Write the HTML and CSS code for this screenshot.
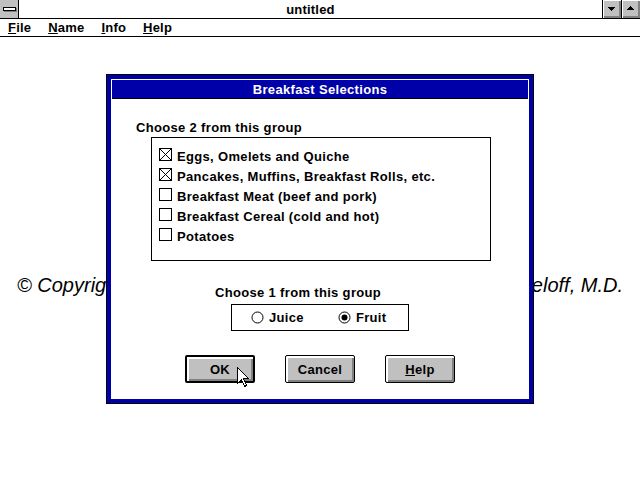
FILE: index.html
```html
<!DOCTYPE html>
<html>
<head>
<meta charset="utf-8">
<title>untitled</title>
<link rel="stylesheet" href="styles.css">
</head>
<body>
<div class="window">
  <div class="titlebar">
    <div class="sysbox"><div class="sysbar"></div></div>
    <div class="title">untitled</div>
    <div class="sizebtns">
      <div class="sizebtn">
        <svg width="18" height="18" viewBox="0 0 18 18" shape-rendering="crispEdges"><polygon points="5,7 12,7 8.5,11" fill="#000"/></svg>
      </div>
      <div class="sizebtn">
        <svg width="18" height="18" viewBox="0 0 18 18" shape-rendering="crispEdges"><polygon points="5,10 12,10 8.5,6" fill="#000"/></svg>
      </div>
    </div>
  </div>
  <div class="menubar">
    <span class="menu"><u>F</u>ile</span>
    <span class="menu"><u>N</u>ame</span>
    <span class="menu"><u>I</u>nfo</span>
    <span class="menu"><u>H</u>elp</span>
  </div>
  <div class="workspace">
    <p class="copyright"><span>© Copyright 1993</span><span>by Eric Zeloff, M.D.</span></p>
  </div>
</div>

<div class="dialog">
  <div class="frame">
    <div class="inner">
      <div class="dlg-title">Breakfast Selections</div>
      <div class="client">
        <div class="label1">Choose 2 from this group</div>
        <div class="group">
          <div class="row">
            <svg class="cb" width="13" height="13" viewBox="0 0 13 13" shape-rendering="crispEdges"><rect x="0.5" y="0.5" width="12" height="12" fill="#fff" stroke="#000"/><path d="M1 1L12 12M12 1L1 12" stroke="#000" stroke-width="1"/></svg>
            <span>Eggs, Omelets and Quiche</span>
          </div>
          <div class="row">
            <svg class="cb" width="13" height="13" viewBox="0 0 13 13" shape-rendering="crispEdges"><rect x="0.5" y="0.5" width="12" height="12" fill="#fff" stroke="#000"/><path d="M1 1L12 12M12 1L1 12" stroke="#000" stroke-width="1"/></svg>
            <span>Pancakes, Muffins, Breakfast Rolls, etc.</span>
          </div>
          <div class="row">
            <svg class="cb" width="13" height="13" viewBox="0 0 13 13" shape-rendering="crispEdges"><rect x="0.5" y="0.5" width="12" height="12" fill="#fff" stroke="#000"/></svg>
            <span>Breakfast Meat (beef and pork)</span>
          </div>
          <div class="row">
            <svg class="cb" width="13" height="13" viewBox="0 0 13 13" shape-rendering="crispEdges"><rect x="0.5" y="0.5" width="12" height="12" fill="#fff" stroke="#000"/></svg>
            <span>Breakfast Cereal (cold and hot)</span>
          </div>
          <div class="row">
            <svg class="cb" width="13" height="13" viewBox="0 0 13 13" shape-rendering="crispEdges"><rect x="0.5" y="0.5" width="12" height="12" fill="#fff" stroke="#000"/></svg>
            <span>Potatoes</span>
          </div>
        </div>
        <div class="label2">Choose 1 from this group</div>
        <div class="radiobox">
          <div class="radio">
            <svg width="13" height="13" viewBox="0 0 13 13"><circle cx="6.5" cy="6.5" r="5.5" fill="#fff" stroke="#000"/></svg>
            <span>Juice</span>
          </div>
          <div class="radio radio-second">
            <svg width="13" height="13" viewBox="0 0 13 13"><circle cx="6.5" cy="6.5" r="5.5" fill="#fff" stroke="#000"/><circle cx="6.5" cy="6.5" r="3" fill="#000"/></svg>
            <span>Fruit</span>
          </div>
        </div>
        <div class="buttons">
          <div class="btn btn-default">OK</div>
          <div class="btn">Cancel</div>
          <div class="btn"><u>H</u>elp</div>
        </div>
      </div>
    </div>
  </div>
</div>

<svg class="cursor" width="13" height="21" viewBox="0 0 13 21" shape-rendering="crispEdges">
  <polygon points="0.5,0.5 0.5,16.5 4.5,12.5 7.5,19.5 9.5,18.5 6.5,11.5 11.5,11.5" fill="#fff" stroke="#000" stroke-width="1" stroke-linejoin="miter"/>
</svg>
</body>
</html>
```

FILE: styles.css
```css
html, body {
  margin: 0;
  padding: 0;
  background: #fff;
}

body {
  width: 640px;
  height: 480px;
  overflow: hidden;
  position: relative;
  font-family: "Liberation Sans", Arial, sans-serif;
  font-weight: bold;
  font-size: 13px;
  color: #000;
  letter-spacing: 0.2px;
}

.window {
  width: 640px;
  height: 480px;
  display: flex;
  flex-direction: column;
}

.titlebar {
  display: flex;
  height: 18px;
  border-bottom: 1px solid #000;
  background: #fff;
}

.sysbox {
  width: 18px;
  height: 18px;
  background: #c0c0c0;
  border-right: 1px solid #000;
  display: flex;
  align-items: center;
  justify-content: center;
}

.sysbar {
  width: 11px;
  height: 2px;
  background: #fff;
  border: 1px solid #000;
  box-shadow: 1px 1px 0 #808080;
  margin-top: -1px;
}

.title {
  flex: 1;
  text-align: center;
  line-height: 19px;
}

.sizebtns {
  display: flex;
}

.sizebtn {
  width: 18px;
  height: 18px;
  border-left: 1px solid #000;
  background: #c0c0c0;
  box-shadow: inset 1px 1px 0 #fff, inset -1px -1px 0 #808080, inset -2px -2px 0 #808080;
}

.sizebtn svg {
  display: block;
}

.menubar {
  display: flex;
  height: 17px;
  border-bottom: 1px solid #000;
  padding-left: 8px;
  line-height: 17px;
}

.menu {
  margin-right: 17px;
}

.workspace {
  flex: 1;
}

.copyright {
  margin: 237px 0 0 17px;
  width: 606px;
  display: flex;
  justify-content: space-between;
  font-style: italic;
  font-weight: normal;
  font-size: 20px;
  line-height: 23px;
  letter-spacing: 0;
}

.dialog {
  position: absolute;
  left: 106px;
  top: 74px;
  width: 428px;
  box-sizing: border-box;
  border: 1px solid #000;
  letter-spacing: 0.33px;
}

.frame {
  border: 4px solid #0000a8;
}

.inner {
  border: 1px solid #fff;
}

.dlg-title {
  height: 17px;
  padding-top: 1px;
  line-height: 18px;
  background: #0000a8;
  color: #fff;
  text-align: center;
  border-bottom: 1px solid #000;
}

.client {
  height: 299px;
  background: #fff;
  overflow: hidden;
}

.label1 {
  margin: 21px 0 0 24px;
  line-height: 16px;
}

.group {
  margin: 1px 0 0 39px;
  width: 340px;
  height: 124px;
  box-sizing: border-box;
  border: 1px solid #000;
  padding: 8px 7px 0;
}

.row {
  display: flex;
  align-items: flex-start;
  height: 20px;
  line-height: 22px;
}

.cb {
  margin-top: 2px;
  margin-right: 5px;
  flex: none;
}

.label2 {
  margin: 24px 0 0 103px;
  line-height: 16px;
}

.radiobox {
  margin: 3px 0 0 119px;
  width: 178px;
  height: 27px;
  box-sizing: border-box;
  border: 1px solid #000;
  display: flex;
  align-items: center;
  padding-left: 19px;
}

.radio {
  display: flex;
  align-items: center;
  gap: 5px;
}

.radio svg {
  display: block;
}

.radio-second {
  margin-left: 34px;
}

.buttons {
  display: flex;
  gap: 30px;
  margin: 24px 0 0 73px;
}

.btn {
  width: 70px;
  height: 28px;
  box-sizing: border-box;
  border: 1px solid #000;
  border-radius: 2px;
  background: #c0c0c0;
  box-shadow: inset 1px 1px 0 #fff, inset 2px 2px 0 #fff, inset -1px -1px 0 #808080, inset -2px -2px 0 #808080;
  display: flex;
  align-items: center;
  justify-content: center;
}

.btn-default {
  border-width: 2px;
}

.cursor {
  position: absolute;
  left: 237px;
  top: 367px;
}
```
